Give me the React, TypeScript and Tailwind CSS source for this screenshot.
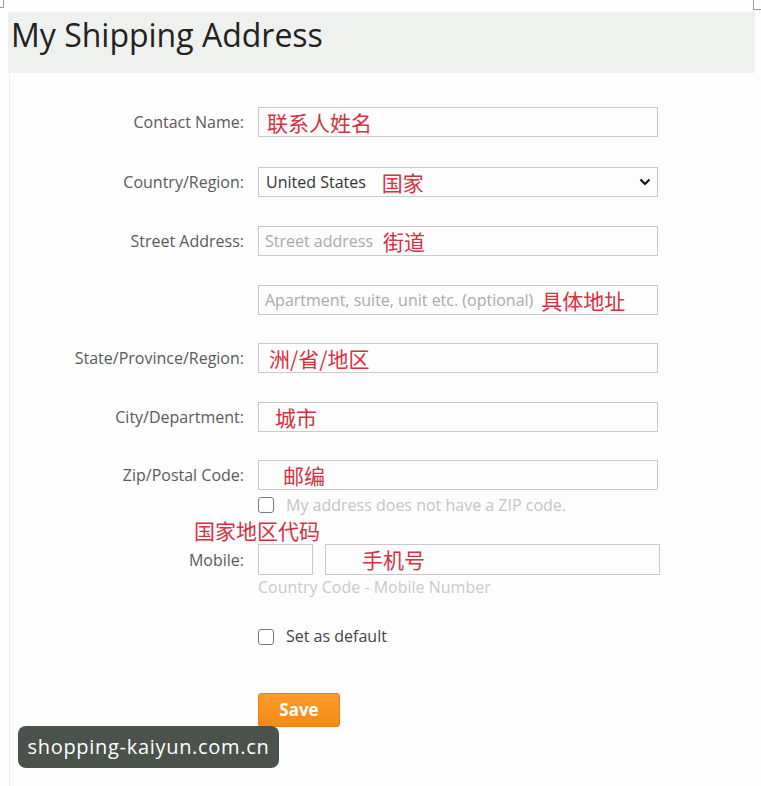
import React from "react";

const sans = { fontFamily: '"Open Sans", "Noto Sans", "Noto Sans CJK SC", sans-serif' };

function Note({ children, className = "" }: { children: React.ReactNode; className?: string }) {
  return (
    <span
      className={`text-[21px] leading-none text-[#d8303f] ${className}`}
      style={{ fontFamily: '"Noto Sans CJK SC", "Noto Sans", sans-serif' }}
    >
      {children}
    </span>
  );
}

function Row({ label, children, className = "" }: { label?: string; children: React.ReactNode; className?: string }) {
  return (
    <div className={`flex items-center ${className}`}>
      <div className="w-[236px] shrink-0 text-right text-[16px] text-[#5a5a5a]">{label}</div>
      <div className="ml-[14px]">{children}</div>
    </div>
  );
}

function Box({ children, className = "w-[400px]" }: { children?: React.ReactNode; className?: string }) {
  return (
    <div className={`h-[30px] border border-[#c9c9c9] bg-[#fdfdfd] flex items-center px-[7px] ${className}`}>
      {children}
    </div>
  );
}

function Check() {
  return <span className="inline-block w-[16px] h-[16px] border border-[#7a7a7a] rounded-[3px] bg-white" />;
}

export default function App() {
  return (
    <div className="relative w-[761px] h-[786px] bg-[#fdfdfd] overflow-hidden" style={sans}>
      {/* corner marks of the frame */}
      <div className="absolute left-0 top-0 w-[4px] h-[8px] border-r border-b border-[#9a9a9a]" />
      <div className="absolute left-[753px] top-0 w-[8px] h-[10px] border-l border-b border-[#9a9a9a]" />
      <div className="absolute left-[9px] top-[73px] w-px h-[713px] bg-[#ececec]" />

      <div className="h-[12px]" />
      <div className="ml-[8px] w-[747px] h-[61px] bg-[#eff1ef] pl-[3px] pt-[3px]">
        <h1 className="text-[32px] leading-[40px] text-[#222]">My Shipping Address</h1>
      </div>

      <div className="pl-[8px] pt-[34px]">
        <Row label="Contact Name:">
          <Box className="w-[400px] pl-[8px]">
            <Note>联系人姓名</Note>
          </Box>
        </Row>

        <Row label="Country/Region:" className="mt-[30px]">
          <Box className="w-[400px]">
            <span className="text-[16px] text-[#333]">United States</span>
            <Note className="ml-[16px]">国家</Note>
            <svg className="ml-auto mr-[-1px]" width="12" height="8" viewBox="0 0 12 8">
              <path d="M1.5 1.5 L6 6 L10.5 1.5" fill="none" stroke="#111" strokeWidth="2.2" />
            </svg>
          </Box>
        </Row>

        <Row label="Street Address:" className="mt-[29px]">
          <Box className="w-[400px] pl-[6px]">
            <span className="text-[16px] text-[#aaa]">Street address</span>
            <Note className="ml-[10px]">街道</Note>
          </Box>
        </Row>

        <Row className="mt-[29px]">
          <Box className="w-[400px] pl-[6px]">
            <span className="text-[16px] text-[#aaa]">Apartment, suite, unit etc. (optional)</span>
            <Note className="ml-[8px]">具体地址</Note>
          </Box>
        </Row>

        <Row label="State/Province/Region:" className="mt-[28px]">
          <Box className="w-[400px] pl-[10px]">
            <Note>洲/省/地区</Note>
          </Box>
        </Row>

        <Row label="City/Department:" className="mt-[29px]">
          <Box className="w-[400px] pl-[16px]">
            <Note>城市</Note>
          </Box>
        </Row>

        <Row label="Zip/Postal Code:" className="mt-[28px]">
          <Box className="w-[400px] pl-[24px]">
            <Note>邮编</Note>
          </Box>
        </Row>

        <div className="flex items-center ml-[250px] mt-[7px] h-[16px]">
          <Check />
          <span className="ml-[12px] text-[16px] leading-[16px] text-[#c4c4c4]">My address does not have a ZIP code.</span>
        </div>

        <div className="ml-[186px] mt-[6px] h-[22px] flex items-center">
          <Note>国家地区代码</Note>
        </div>

        <Row label="Mobile:" className="mt-[3px]">
          <div className="flex items-center">
            <div className="w-[55px] h-[31px] border border-[#c9c9c9]" />
            <div className="ml-[12px] w-[335px] h-[31px] border border-[#c9c9c9] flex items-center pl-[36px]">
              <Note>手机号</Note>
            </div>
          </div>
        </Row>

        <div className="ml-[250px] mt-[2px] text-[16px] leading-[20px] text-[#cacaca]">Country Code - Mobile Number</div>

        <div className="flex items-center ml-[250px] mt-[31px] h-[17px]">
          <Check />
          <span className="ml-[12px] text-[16px] leading-[17px] text-[#444]">Set as default</span>
        </div>

        <button className="ml-[250px] mt-[48px] w-[82px] h-[34px] rounded-[3px] border border-[#e9800f] bg-gradient-to-b from-[#fb9c2c] to-[#f48a12] text-white font-bold text-[17px]">
          Save
        </button>
      </div>

      {/* site watermark */}
      <div className="absolute left-[18px] top-[726px] w-[261px] h-[42px] rounded-[8px] bg-[#4b524b] flex items-center justify-center">
        <span className="text-[20px] text-white tracking-[0.7px]">shopping-kaiyun.com.cn</span>
      </div>
    </div>
  );
}
